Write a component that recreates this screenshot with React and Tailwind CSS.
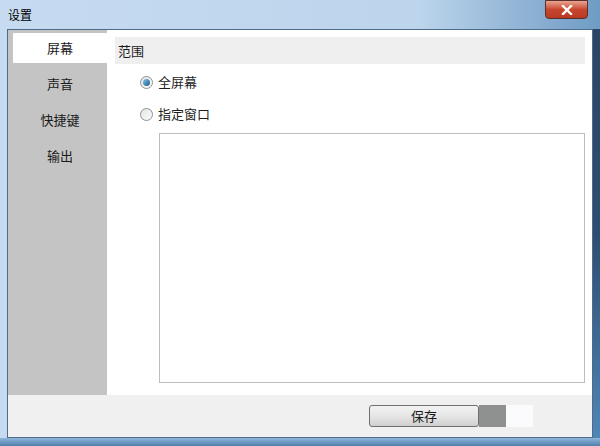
import React from 'react';

const FONT = { fontFamily: '"Microsoft YaHei", "Noto Sans CJK SC", sans-serif' };

const NAV = ['屏幕', '声音', '快捷键', '输出'];

const Radio = ({ checked, label }) => (
    <div className="flex items-center h-[20px]">
        <span className="w-[13px] h-[13px] rounded-full border border-[#8e8f8f] bg-gradient-to-br from-[#e4e4e4] to-[#fdfdfd] flex items-center justify-center">
            {checked && <span className="w-[7px] h-[7px] rounded-full bg-gradient-to-br from-[#7dc4ea] to-[#1a5a8d]" />}
        </span>
        <span className="ml-[5px] text-[13px] text-[#1e1e1e]">{label}</span>
    </div>
);

export default function App() {
    return (
        <div
            className="w-[600px] h-[446px] flex flex-col bg-gradient-to-r from-[#c6dbf0] via-[#bcd4ec] via-70% to-[#6f9cc4] overflow-hidden"
            style={FONT}
        >
            {/* Title bar */}
            <div className="h-[29px] flex items-start relative">
                <span className="ml-[8px] mt-[6px] text-[12px] text-black">设置</span>
                <div className="absolute right-[12px] top-0 w-[43px] h-[19px] rounded-b-[4px] border border-[#5a2e2a] bg-gradient-to-b from-[#e8a493] via-[#c8452e] to-[#b93a22] flex items-center justify-center">
                    <svg width="12" height="10" viewBox="0 0 12 10">
                        <path d="M2 1 L10 9 M10 1 L2 9" stroke="#fff" strokeWidth="2.4" strokeLinecap="square" />
                    </svg>
                </div>
            </div>

            <div className="flex-1 flex pl-[7px]">
                <div className="flex-1 flex flex-col border border-[#4d6c8c] bg-[#f0f0f0]">
                    <div className="flex-1 flex">
                        {/* Sidebar */}
                        <div className="w-[99px] bg-[#c4c4c4] pt-[3px] pl-[5px] flex flex-col">
                            {NAV.map((item, i) => (
                                <div
                                    key={item}
                                    className={`h-[30px] mb-[6px] flex items-center justify-center text-[13px] text-[#1a1a1a] ${i === 0 ? 'bg-white' : ''}`}
                                >
                                    {item}
                                </div>
                            ))}
                        </div>

                        {/* Content */}
                        <div className="flex-1 bg-white pt-[7px] pl-[8px] pr-[7px] pb-[12px] flex flex-col">
                            <div className="h-[27px] bg-[#efefef] flex items-center pl-[3px] text-[13px] text-[#1a1a1a]">范围</div>
                            <div className="pl-[25px] mt-[8px] flex flex-col gap-[12px]">
                                <Radio checked label="全屏幕" />
                                <Radio label="指定窗口" />
                            </div>
                            <div className="ml-[44px] mt-[9px] flex-1 border border-[#bdbdbd]" />
                        </div>
                    </div>

                    {/* Footer */}
                    <div className="h-[42px] flex items-center justify-end pr-[59px]">
                        <button className="w-[110px] h-[22px] rounded-[3px] border border-[#707070] bg-gradient-to-b from-[#f2f2f2] via-[#e6e6e6] to-[#cfcfcf] text-[13px] text-[#1a1a1a]">
                            保存
                        </button>
                        <div className="w-[27px] h-[22px] bg-[#8f9090]" />
                        <div className="w-[27px] h-[22px] bg-[#fbfbfd]" />
                    </div>
                </div>
                <div className="w-[7px] bg-gradient-to-b from-[#2c4565] via-[#2f4d70] to-[#4f86b8]" />
            </div>

            <div className="h-[8px] bg-gradient-to-b from-[#8fb6dc] to-[#4f7faa]" />
        </div>
    );
}
